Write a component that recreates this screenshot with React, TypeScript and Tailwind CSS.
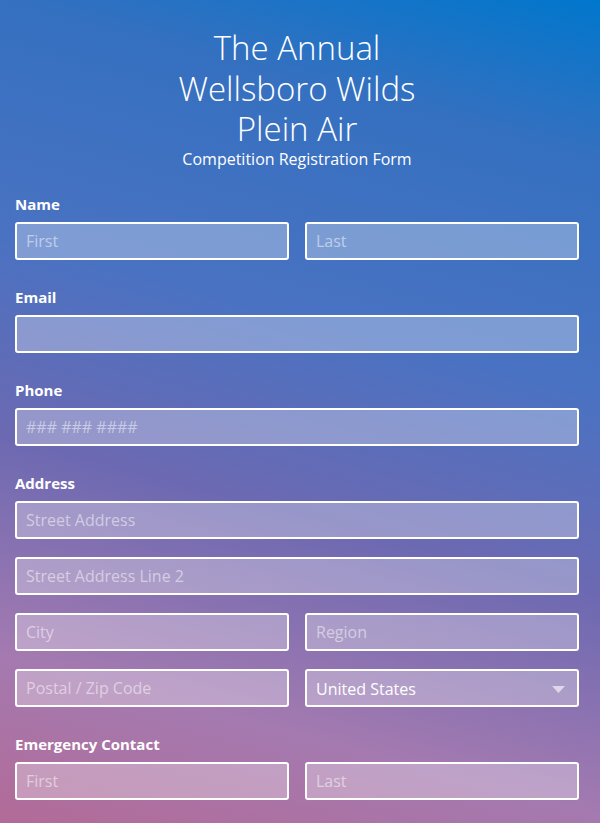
import React from "react";

const inputCls =
  "w-full h-[38px] rounded-[3px] border-2 border-white bg-white/30 px-[9px] text-[16px] text-white placeholder:text-white/50 outline-none";

const Label = ({ children }: { children: React.ReactNode }) => (
  <label className="block text-[15px] leading-[18px] font-bold text-white mb-[9px]">
    {children}
  </label>
);

const App = () => {
  return (
    <div
      className="min-h-screen w-full bg-[linear-gradient(15deg,#b36a96_0%,#a47ab0_18%,#6c69b2_40%,#4a72c2_60%,#3570c0_84%,#0077cc_100%)] pl-[15px] pr-[21px] pt-[28px] pb-8 text-white"
      style={{ fontFamily: '"Open Sans", "Noto Sans", sans-serif' }}
    >
      <div className="text-center">
        <h1 className="text-[33px] leading-[40.5px] font-light">
          The Annual
          <br />
          Wellsboro Wilds
          <br />
          Plein Air
        </h1>
        <p className="text-[16px] leading-[18px]">Competition Registration Form</p>
      </div>

      <form className="mt-[27px] flex flex-col gap-[28px]">
        <div>
          <Label>Name</Label>
          <div className="grid grid-cols-2 gap-4">
            <input className={inputCls} placeholder="First" />
            <input className={inputCls} placeholder="Last" />
          </div>
        </div>

        <div>
          <Label>Email</Label>
          <input className={inputCls} />
        </div>

        <div>
          <Label>Phone</Label>
          <input className={inputCls} placeholder="### ### ####" />
        </div>

        <div>
          <Label>Address</Label>
          <div className="flex flex-col gap-[18px]">
            <input className={inputCls} placeholder="Street Address" />
            <input className={inputCls} placeholder="Street Address Line 2" />
            <div className="grid grid-cols-2 gap-4">
              <input className={inputCls} placeholder="City" />
              <input className={inputCls} placeholder="Region" />
            </div>
            <div className="grid grid-cols-2 gap-4">
              <input className={inputCls} placeholder="Postal / Zip Code" />
              <div className="relative">
                <select className={inputCls + " appearance-none pt-[2px]"} defaultValue="us">
                  <option value="us">United States</option>
                  <option value="ca">Canada</option>
                </select>
                <svg
                  className="pointer-events-none absolute right-[14px] top-[17px]"
                  width="13"
                  height="7"
                  viewBox="0 0 13 7"
                >
                  <path d="M0 0h13L6.5 7z" fill="rgba(255,255,255,0.6)" />
                </svg>
              </div>
            </div>
          </div>
        </div>

        <div>
          <Label>Emergency Contact</Label>
          <div className="grid grid-cols-2 gap-4">
            <input className={inputCls} placeholder="First" />
            <input className={inputCls} placeholder="Last" />
          </div>
        </div>
      </form>
    </div>
  );
};

export default App;
